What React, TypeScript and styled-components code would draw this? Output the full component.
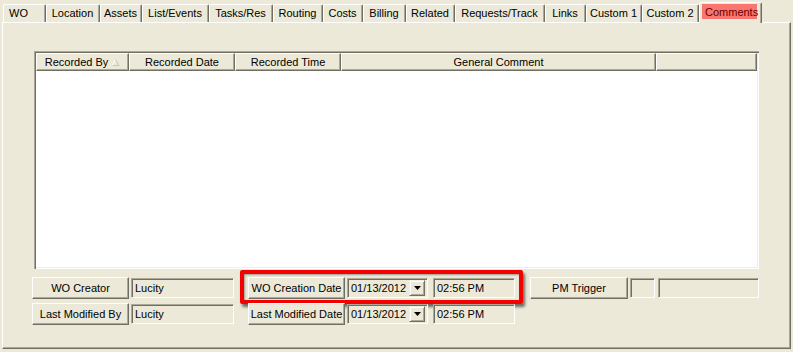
import React from 'react';
import styled, { createGlobalStyle } from 'styled-components';

const FACE = '#ECE9D8';
const SHADOW = '#ACA899';
const DARK = '#716F64';

const GlobalStyle = createGlobalStyle`
  html, body {
    margin: 0;
    padding: 0;
    background: ${FACE};
  }
  body {
    font-family: "Liberation Sans", Arial, sans-serif;
    font-size: 11px;
    color: #000;
  }
`;

const Window = styled.div`
  box-sizing: border-box;
  width: 793px;
  height: 352px;
  padding: 2px 2px 3px 2px;
  display: flex;
  flex-direction: column;
  background: ${FACE};
`;

const TabStrip = styled.div`
  position: relative;
  z-index: 1;
  display: flex;
  align-items: flex-start;
  height: 21px;
  margin-bottom: -1px;
  padding-left: 1px;
`;

const Tab = styled.div<{ $width: number; $active?: boolean; $left?: boolean }>`
  box-sizing: border-box;
  width: ${p => p.$width}px;
  height: ${p => (p.$active ? 21 : 18)}px;
  margin-top: ${p => (p.$active ? 0 : 2)}px;
  padding: ${p => (p.$active ? '1px 0 0 2px' : p.$left ? '0 0 1px 5px' : '0 1px 1px 0')};
  display: flex;
  align-items: ${p => (p.$active ? 'flex-start' : 'center')};
  justify-content: ${p => (p.$active || p.$left ? 'flex-start' : 'center')};
  background: ${FACE};
  border-top: 1px solid #fff;
  border-left: 1px solid #fff;
  border-right: 1px solid ${DARK};
  box-shadow: inset -1px 0 ${SHADOW};
  border-radius: 2px 2px 0 0;
  white-space: nowrap;
`;

const ActiveLabel = styled.span`
  display: flex;
  align-items: center;
  width: 55px;
  height: 15px;
  padding-left: 3px;
  box-sizing: border-box;
  background: #f8766e;
  color: #6e0000;
`;

const Panel = styled.div`
  flex: 1;
  box-sizing: border-box;
  padding: 28px 0 0 29px;
  border-top: 1px solid #fff;
  border-left: 1px solid #fff;
  border-right: 1px solid ${DARK};
  border-bottom: 1px solid ${DARK};
  box-shadow: inset -1px -1px ${SHADOW};
`;

const Grid = styled.div`
  box-sizing: border-box;
  width: 725px;
  height: 218px;
  margin-left: 2px;
  padding: 2px;
  display: flex;
  flex-direction: column;
  background: #fff;
  box-shadow: inset 1px 1px ${SHADOW}, inset 2px 2px ${DARK}, inset -1px -1px #fff, inset -2px -2px #f1efe2;
`;

const HeaderRow = styled.div`
  display: flex;
  height: 18px;
  flex-shrink: 0;
`;

const HeaderCell = styled.div<{ $width?: number }>`
  box-sizing: border-box;
  ${p => (p.$width ? `width: ${p.$width}px;` : 'flex: 1;')}
  height: 18px;
  display: flex;
  align-items: center;
  justify-content: center;
  gap: 4px;
  background: ${FACE};
  border-top: 1px solid #fff;
  border-left: 1px solid #fff;
  border-right: 1px solid ${DARK};
  border-bottom: 1px solid ${DARK};
  box-shadow: inset -1px -1px ${SHADOW};
  white-space: nowrap;
`;

const GridBody = styled.div`
  flex: 1;
  background: #fff;
`;

const Fields = styled.div`
  display: flex;
  flex-direction: column;
  gap: 4px;
  margin-top: 8px;
`;

const FieldRow = styled.div`
  display: flex;
  align-items: center;
  height: 22px;
`;

const Group = styled.div<{ $offset?: number }>`
  position: relative;
  display: flex;
  align-items: center;
  gap: 2px;
  margin-left: ${p => p.$offset ?? 0}px;
`;

const Highlight = styled.div`
  position: absolute;
  top: -7px;
  left: -8px;
  right: -8px;
  bottom: -5px;
  border: 4px solid #f40000;
  border-radius: 2px;
  box-shadow: 2px 3px 3px rgba(0, 0, 0, 0.55), inset 1px 1px 2px rgba(0, 0, 0, 0.35);
  pointer-events: none;
`;

const Button = styled.div<{ $width: number }>`
  box-sizing: border-box;
  width: ${p => p.$width}px;
  height: 22px;
  display: flex;
  align-items: center;
  justify-content: center;
  background: ${FACE};
  border-top: 1px solid #fff;
  border-left: 1px solid #fff;
  border-right: 1px solid ${DARK};
  border-bottom: 1px solid ${DARK};
  box-shadow: inset -1px -1px ${SHADOW};
  white-space: nowrap;
`;

const TextBox = styled.div<{ $width: number; $gap?: number }>`
  box-sizing: border-box;
  width: ${p => p.$width}px;
  height: 20px;
  margin-left: ${p => p.$gap ?? 0}px;
  padding-left: 3px;
  display: flex;
  align-items: center;
  background: ${FACE};
  border-top: 1px solid ${SHADOW};
  border-left: 1px solid ${SHADOW};
  border-right: 1px solid #fff;
  border-bottom: 1px solid #fff;
  box-shadow: inset 1px 1px ${DARK};
  white-space: nowrap;
`;

const ComboBox = styled(TextBox)`
  justify-content: space-between;
  padding-right: 2px;
`;

const DropButton = styled.div`
  box-sizing: border-box;
  width: 16px;
  height: 16px;
  display: flex;
  align-items: center;
  justify-content: center;
  background: ${FACE};
  border-top: 1px solid #f1efe2;
  border-left: 1px solid #f1efe2;
  border-right: 1px solid ${DARK};
  border-bottom: 1px solid ${DARK};
  box-shadow: inset 1px 1px #fff, inset -1px -1px ${SHADOW};
`;

const SortArrow = () => (
  <svg width="8" height="7" viewBox="0 0 8 7">
    <polyline points="0.5,6.5 3.5,0.5" fill="none" stroke="#fff" />
    <polyline points="3.5,0.5 7,6.5 0.5,6.5" fill="none" stroke="#c9c5b5" />
  </svg>
);

const DownArrow = () => (
  <svg width="7" height="4" viewBox="0 0 7 4">
    <polygon points="0,0 7,0 3.5,4" fill="#000" />
  </svg>
);

const tabs: [string, number][] = [
  ['Location', 54],
  ['Assets', 42],
  ['List/Events', 67],
  ['Tasks/Res', 64],
  ['Routing', 50],
  ['Costs', 40],
  ['Billing', 43],
  ['Related', 49],
  ['Requests/Track', 90],
  ['Links', 41],
  ['Custom 1', 56],
  ['Custom 2', 57],
];

const columns: [string, number][] = [
  ['Recorded Date', 106],
  ['Recorded Time', 106],
  ['General Comment', 315],
];

export default function App() {
  return (
    <>
      <GlobalStyle />
      <Window>
        <TabStrip>
          <Tab $width={43} $left>WO</Tab>
          {tabs.map(([label, width]) => (
            <Tab key={label} $width={width}>{label}</Tab>
          ))}
          <Tab $width={63} $active>
            <ActiveLabel>Comments</ActiveLabel>
          </Tab>
        </TabStrip>

        <Panel>
          <Grid>
            <HeaderRow>
              <HeaderCell $width={93}>
                Recorded By
                <SortArrow />
              </HeaderCell>
              {columns.map(([label, width]) => (
                <HeaderCell key={label} $width={width}>{label}</HeaderCell>
              ))}
              <HeaderCell />
            </HeaderRow>
            <GridBody />
          </Grid>

          <Fields>
            <FieldRow>
              <Group>
                <Button $width={97}>WO Creator</Button>
                <TextBox $width={103}>Lucity</TextBox>
              </Group>
              <Group $offset={14}>
                <Highlight />
                <Button $width={97}>WO Creation Date</Button>
                <ComboBox $width={81}>
                  01/13/2012
                  <DropButton><DownArrow /></DropButton>
                </ComboBox>
                <TextBox $width={82} $gap={3}>02:56 PM</TextBox>
              </Group>
              <Group $offset={15}>
                <Button $width={98}>PM Trigger</Button>
                <TextBox $width={25} />
                <TextBox $width={101} $gap={1} />
              </Group>
            </FieldRow>
            <FieldRow>
              <Group>
                <Button $width={97}>Last Modified By</Button>
                <TextBox $width={103}>Lucity</TextBox>
              </Group>
              <Group $offset={14}>
                <Button $width={97}>Last Modified Date</Button>
                <ComboBox $width={81}>
                  01/13/2012
                  <DropButton><DownArrow /></DropButton>
                </ComboBox>
                <TextBox $width={82} $gap={3}>02:56 PM</TextBox>
              </Group>
            </FieldRow>
          </Fields>
        </Panel>
      </Window>
    </>
  );
}
